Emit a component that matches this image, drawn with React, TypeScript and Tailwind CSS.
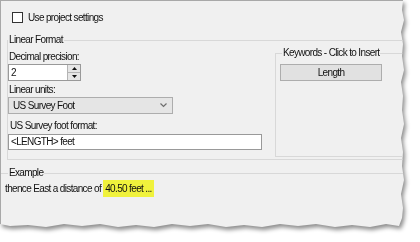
import React from "react";

function Spinner() {
  return (
    <div className="flex h-full w-[13px] flex-col border-l border-[#b4b4b4]">
      <button className="flex flex-1 items-center justify-center border-b border-[#b4b4b4] bg-[#e6e6e6]">
        <svg width="5" height="3" viewBox="0 0 5 3">
          <path d="M0 3 L2.5 0 L5 3 Z" fill="#111" />
        </svg>
      </button>
      <button className="flex flex-1 items-center justify-center bg-[#e6e6e6]">
        <svg width="5" height="3" viewBox="0 0 5 3">
          <path d="M0 0 L5 0 L2.5 3 Z" fill="#111" />
        </svg>
      </button>
    </div>
  );
}

export default function App() {
  return (
    <div className="h-[242px] w-[420px] bg-white font-['Liberation_Sans',Arial,sans-serif] text-[10px] leading-[12px] tracking-[-0.65px] text-[#111]">
      <div className="w-fit drop-shadow-[2px_3px_2px_rgba(0,0,0,0.45)]">
        <div className="flex h-[228px] w-[404px] flex-col overflow-hidden border-l border-t border-[#a8a8a8] bg-[#f0f0f0] [clip-path:polygon(0px_0px,403px_0px,402px_10px,404px_20px,401px_32px,403px_44px,402px_56px,404px_70px,401px_82px,403px_96px,402px_110px,404px_124px,401px_138px,403px_152px,402px_166px,404px_180px,401px_194px,403px_208px,402px_218px,399px_226px,386px_224px,370px_227px,352px_225px,335px_227px,316px_224px,298px_226px,280px_224px,262px_227px,244px_225px,226px_227px,208px_224px,190px_226px,172px_224px,154px_227px,136px_225px,118px_227px,100px_224px,82px_226px,64px_224px,46px_227px,28px_225px,10px_226px,0px_224px)]">
          {/* checkbox row */}
          <label className="ml-[11px] mt-[11px] flex h-[11px] items-center">
            <span className="h-[11px] w-[11px] border border-[#333] bg-white" />
            <span className="ml-[5px]">Use project settings</span>
          </label>

          {/* Linear Format group */}
          <fieldset className="ml-[6px] mt-[11px] h-[126px] w-[410px] border-b border-l border-t border-[#d8d8d8]">
            <legend className="ml-0 px-[1px]">Linear Format</legend>
            <div className="flex">
              <div className="flex w-[254px] flex-col">
                <span className="ml-[1px] mt-[5px]">Decimal precision:</span>
                <div className="mt-[1px] flex h-[17px] w-[73px] border border-[#999] bg-white">
                  <span className="flex-1 pl-[2px] leading-[15px]">2</span>
                  <Spinner />
                </div>
                <span className="ml-[1px] mt-[3px]">Linear units:</span>
                <div className="mt-[1px] flex h-[17px] w-[165px] items-center justify-between border border-[#adadad] bg-[#e5e5e5] pl-[4px] pr-[5px]">
                  <span>US Survey Foot</span>
                  <svg width="7" height="5" viewBox="0 0 7 5">
                    <path d="M0.5 0.5 L3.5 3.5 L6.5 0.5" fill="none" stroke="#6e6e6e" strokeWidth="1.2" />
                  </svg>
                </div>
                <span className="ml-[2px] mt-[6px]">US Survey foot format:</span>
                <div className="mt-[2px] flex h-[16px] w-[254px] items-center border border-[#999] bg-white pl-[2px]">
                  &lt;LENGTH&gt; feet
                </div>
              </div>

              {/* Keywords group */}
              <fieldset className="ml-[13px] mt-[1px] h-[110px] w-[140px] border-b border-l border-t border-[#d8d8d8]">
                <legend className="ml-[6px] px-[1px]">Keywords - Click to Insert</legend>
                <button className="ml-[4px] mt-[5px] h-[17px] w-[102px] border border-[#adadad] bg-[#e1e1e1] text-center">
                  Length
                </button>
              </fieldset>
            </div>
          </fieldset>

          {/* Example group */}
          <fieldset className="mt-[7px] w-[410px] border-t border-[#d8d8d8]">
            <legend className="ml-[7px] px-[1px]">Example</legend>
            <div className="ml-[4px] mt-[1px] flex items-center">
              <span>thence East a distance of&nbsp;</span>
              <span className="flex h-[17px] items-center bg-[#f0f23c] px-[2px]">40.50 feet ...</span>
            </div>
          </fieldset>
        </div>
      </div>
    </div>
  );
}
